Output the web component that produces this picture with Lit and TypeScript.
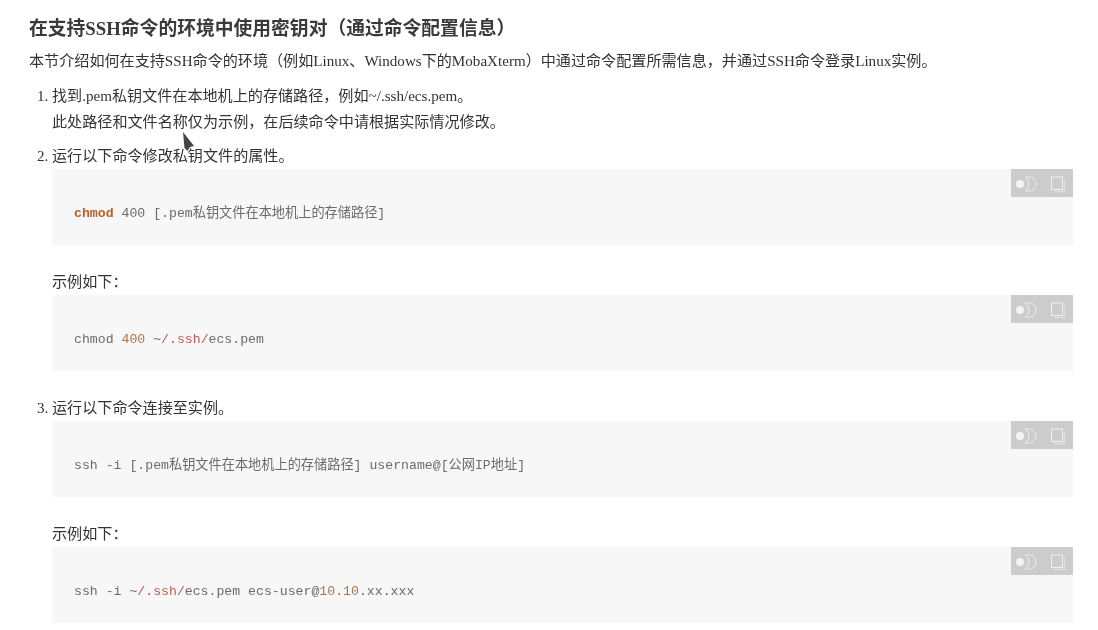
import { LitElement, html, css } from "lit";
import { customElement } from "lit/decorators.js";

const tools = html`<div class="tools"><svg width="62" height="28" viewBox="0 0 62 28" fill="none">
    <circle cx="9" cy="15" r="4" fill="#f4f4f4"></circle>
    <path d="M14 8.2 C21 6.5 25 10.5 25 15 C25 19.5 21 23.5 14 21.8 C17 19.8 18 17.2 18 15 C18 12.8 17 10.2 14 8.2 Z" stroke="#f0f0f0" stroke-width="1"></path>
    <rect x="40.5" y="8" width="11" height="12.5" stroke="#f0f0f0" stroke-width="1"></rect>
    <path d="M53.5 10.5 V22.5 H43" stroke="#dedede" stroke-width="1.3"></path>
  </svg></div>`;

@customElement("app-root")
export class AppRoot extends LitElement {
  static styles = css`
    :host {
      display: block;
      position: relative;
      width: 1098px;
      height: 630px;
      overflow: hidden;
      background: #fff;
      font-family: "Liberation Serif", "Noto Sans CJK SC", serif;
      font-size: 15.1px;
      line-height: 26px;
      color: #333;
    }
    .page { padding: 16px 25px 0 29px; filter: blur(0.5px); will-change: transform; }
    h1 { margin: 0 0 6px; font-size: 18.8px; line-height: 26px; font-weight: 700; color: #3a3a3a; }
    p { margin: 0; }
    ol { margin: 9px 0 0; padding: 0 0 0 23px; }
    li + li { margin-top: 8px; }
    .block {
      position: relative;
      height: 76px;
      box-sizing: border-box;
      margin: 0 0 24px;
      padding: 33px 22px 0;
      background: #f7f7f8;
    }
    code {
      display: block;
      font-family: "Liberation Mono", "Noto Sans CJK SC", monospace;
      font-size: 13.2px;
      line-height: 24px;
      color: #6b6b6b;
      white-space: pre;
    }
    .tools {
      position: absolute;
      top: 0;
      right: 0;
      width: 62px;
      height: 28px;
      background: #cccccc;
    }
    .tools svg { display: block; }
    .kw { color: #b5622a; font-weight: 700; }
    .num { color: #b37440; }
    .path { color: #bd5c52; }
    .cursor { position: absolute; left: 183px; top: 131px; }
  `;

  render() {
    return html`
      <div class="page">
        <h1>在支持SSH命令的环境中使用密钥对（通过命令配置信息）</h1>
        <p>本节介绍如何在支持SSH命令的环境（例如Linux、Windows下的MobaXterm）中通过命令配置所需信息，并通过SSH命令登录Linux实例。</p>
        <ol>
          <li>找到.pem私钥文件在本地机上的存储路径，例如~/.ssh/ecs.pem。<br />此处路径和文件名称仅为示例，在后续命令中请根据实际情况修改。</li>
          <li>运行以下命令修改私钥文件的属性。
            <div class="block">${tools}<code><span class="kw">chmod</span> 400 [.pem私钥文件在本地机上的存储路径]</code></div>
            <p>示例如下：</p>
            <div class="block">${tools}<code>chmod <span class="num">400</span> ~<span class="path">/.ssh/</span>ecs.pem</code></div>
          </li>
          <li>运行以下命令连接至实例。
            <div class="block">${tools}<code>ssh -i [.pem私钥文件在本地机上的存储路径] username@[公网IP地址]</code></div>
            <p>示例如下：</p>
            <div class="block">${tools}<code>ssh -i ~<span class="path">/.ssh/</span>ecs.pem ecs-user@<span class="num">10.10</span>.xx.xxx</code></div>
          </li>
        </ol>
      </div>
      <svg class="cursor" width="14" height="22" viewBox="0 0 14 22">
        <path d="M0 1 L11 15 L7 16 L4.5 20 L1.5 17 Z" fill="#444"></path>
      </svg>
    `;
  }
}
